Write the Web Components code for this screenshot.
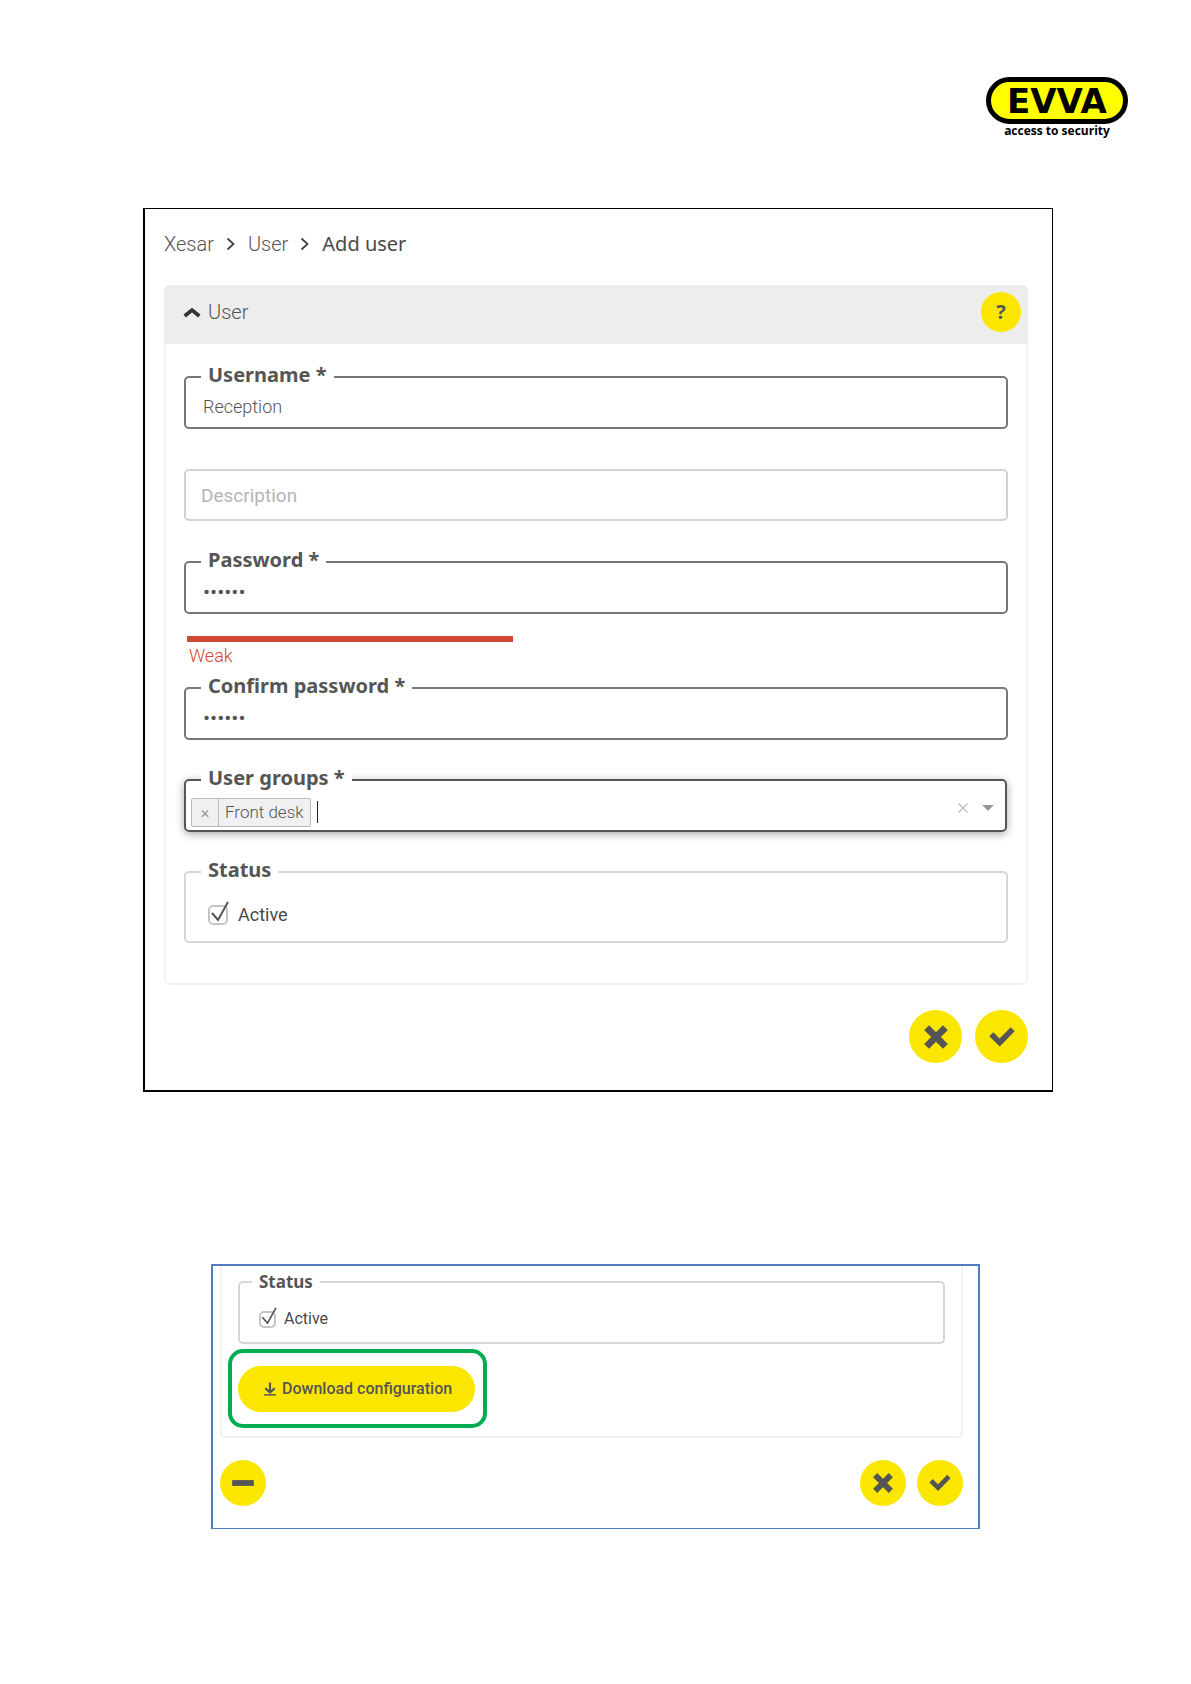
<!DOCTYPE html>
<html lang="en">
<head>
<meta charset="utf-8">
<meta name="viewport" content="width=device-width, initial-scale=1">
<title>Xesar - Add user</title>
<style>
  body {
    margin: 0;
    background: #fff;
    color: #555;
    font-family: Roboto, "Liberation Sans", sans-serif;
    font-size: 18px;
    line-height: 24px;
  }
</style>
</head>
<body>
<manual-page></manual-page>

<script>
const define = (name, html, setup) => {
  const template = document.createElement('template');
  template.innerHTML = html;

  customElements.define(name, class extends HTMLElement {
    constructor() {
      super();
      this.attachShadow({ mode: 'open' });
      this.shadowRoot.appendChild(template.content.cloneNode(true));
    }

    connectedCallback() {
      if (setup) setup(this, this.shadowRoot);
    }
  });
};

const ICONS = {
  cross: '<path d="M2.6 2.6 21.4 21.4M21.4 2.6 2.6 21.4" stroke-width="7"/>',
  check: '<path d="M1.3 9.3 9.7 17.5 22.7 4.2" stroke-width="5.6"/>',
  minus: '<path d="M-1 12H25" stroke-width="7"/>',
  right: '<path d="M5 1 17 12 5 23" stroke-width="3.6"/>',
  up: '<path d="M1 18 12 9 23 18" stroke-width="5.5"/>',
  clear: '<path d="M3 3 21 21M21 3 3 21" stroke-width="2.4"/>',
  down: '<path d="M2 7H22L12 17Z" fill="currentColor" stroke="none"/>',
  download: '<path d="M12 1V18M4 10.5 12 18 20 10.5" stroke-width="3.6"/><path d="M2 22H22" stroke-width="2.6"/>'
};

define('ui-icon', `
  <style>
    :host { display: inline-block; flex: none; width: 24px; height: 24px; }
    svg { display: block; width: 100%; height: 100%; fill: none; stroke: currentColor; overflow: visible; }
  </style>
  <svg viewBox="0 0 24 24" aria-hidden="true"></svg>
`, (host, root) => {
  root.querySelector('svg').innerHTML = ICONS[host.getAttribute('name')];
});

define('evva-logo', `
  <style>
    :host { display: flex; flex-direction: column; align-items: center; color: #000; }
    .pill {
      box-sizing: border-box;
      width: 142px;
      height: 47px;
      border: 5px solid #000;
      border-radius: 24px;
      background: #ff0;
      text-align: center;
      font: 900 34px/38px "DejaVu Sans", sans-serif;
    }
    .claim { font: 700 12px/14px "Open Sans", "Noto Sans", sans-serif; }
  </style>
  <div class="pill">EVVA</div>
  <div class="claim">access to security</div>
`);

define('round-button', `
  <style>
    :host { display: block; flex: none; }
    button {
      display: flex;
      align-items: center;
      justify-content: center;
      width: var(--button-size, 53px);
      height: var(--button-size, 53px);
      padding: 0;
      border: 0;
      border-radius: 50%;
      background: #fbe600;
      color: #555;
      font: 700 20px/24px "Noto Sans", sans-serif;
    }
    ::slotted(ui-icon) { width: var(--icon-size, 24px); height: var(--icon-size, 24px); }
  </style>
  <button type="button"><slot></slot></button>
`, (host, root) => {
  root.querySelector('button').setAttribute('aria-label', host.getAttribute('label'));
});

define('bread-crumbs', `
  <style>
    :host { display: block; font-size: 20px; }
    nav { display: flex; align-items: center; gap: 11px; }
    a { color: inherit; text-decoration: none; font-weight: 300; }
    ui-icon { width: 12px; height: 12px; color: #444; }
    .current { color: #4a4a4a; font-family: "Noto Sans", sans-serif; }
  </style>
  <nav aria-label="Breadcrumb">
    <a href="#xesar">Xesar</a>
    <ui-icon name="right"></ui-icon>
    <a href="#user">User</a>
    <ui-icon name="right"></ui-icon>
    <span class="current">Add user</span>
  </nav>
`);

define('form-panel', `
  <style>
    :host { display: block; border-radius: 5px; overflow: hidden; }
    header {
      display: flex;
      align-items: center;
      justify-content: space-between;
      height: 54px;
      padding: 0 7px 5px 20px;
      background: #ededed;
    }
    .toggle {
      display: flex;
      align-items: center;
      gap: 8px;
      padding: 0;
      border: 0;
      background: none;
      color: inherit;
      font: inherit;
      font-size: 20px;
      font-weight: 300;
    }
    .toggle ui-icon { width: 16px; height: 16px; color: #333; }
    round-button { --button-size: 40px; }
    .body {
      display: flex;
      flex-direction: column;
      gap: 28px;
      padding: 21px 18px 40px;
      border: 2px solid #f2f2f2;
      border-top: 0;
      border-radius: 0 0 5px 5px;
    }
  </style>
  <header>
    <button class="toggle" type="button" aria-expanded="true">
      <ui-icon name="up"></ui-icon><span></span>
    </button>
    <round-button label="Help">?</round-button>
  </header>
  <div class="body"><slot></slot></div>
`, (host, root) => {
  root.querySelector('span').textContent = host.getAttribute('heading');
});

// Box with its caption set into the top border
const FIELDSET = `
  fieldset {
    min-width: 0;
    margin: 0;
    padding: 0 15px;
    border: 2px solid #777;
    border-radius: 5px;
  }
  legend {
    padding: 0 7px var(--legend-lift, 4px);
    background: #fff;
    font: 700 var(--legend-size, 20px)/20px "Noto Sans", sans-serif;
  }
`;

define('text-field', `
  <style>
    :host { display: block; }
    ${FIELDSET}
    input {
      box-sizing: border-box;
      display: block;
      width: 100%;
      height: 38px;
      padding: 0 2px 3px;
      border: 0;
      outline: 0;
      background: none;
      color: inherit;
      font: inherit;
      font-weight: 300;
    }
    input[type=password] { font-size: 21px; font-weight: 400; }
    input::placeholder { color: #b5b5b5; font-weight: 400; opacity: 1; }
    :host([placeholder]) { margin: 12px 0 1px; }
    :host([placeholder]) fieldset { border-color: #d2d2d2; }
    :host([placeholder]) input { height: 48px; padding: 0; font-size: 19px; }
  </style>
  <fieldset>
    <legend><label for="control"></label></legend>
    <input id="control">
  </fieldset>
`, (host, root) => {
  const input = root.querySelector('input');
  input.type = host.getAttribute('type') || 'text';
  input.value = host.getAttribute('value') || '';
  if (host.hasAttribute('placeholder')) {
    input.placeholder = host.getAttribute('placeholder');
    input.setAttribute('aria-label', input.placeholder);
    root.querySelector('legend').remove();
  } else {
    root.querySelector('label').textContent = host.getAttribute('label');
  }
});

define('password-strength', `
  <style>
    :host { display: block; margin: -6px 0 -20px 3px; color: #d24635; font-weight: 300; }
    .bar { width: 326px; max-width: 100%; height: 6px; background: #d24635; }
    .text { padding: 2px 2px 0; }
  </style>
  <div class="bar"></div>
  <div class="text"><slot></slot></div>
`);

define('group-select', `
  <style>
    :host { display: block; }
    ${FIELDSET}
    fieldset {
      margin-right: 1px;
      border-color: #555;
      box-shadow: 0 2px 9px rgba(0, 0, 0, 0.35);
    }
    .row { display: flex; align-items: center; height: 38px; margin: 0 -10px; }
    .chip {
      display: flex;
      box-sizing: border-box;
      height: 29px;
      margin-top: 2px;
      border: 1px solid #bbb;
      border-radius: 2px;
      background: #f0f0f0;
      font-size: 17px;
      font-weight: 300;
      line-height: 26px;
    }
    .chip button {
      width: 27px;
      padding: 0;
      border: 0;
      border-right: 1px solid #bbb;
      background: none;
      color: #888;
      font: inherit;
    }
    .chip span { padding: 0 6px; }
    input {
      flex: 1;
      min-width: 0;
      height: 22px;
      margin: 2px 0 0 6px;
      padding: 0;
      border: 0;
      border-left: 1px solid #222;
      outline: 0;
      background: none;
      font: inherit;
    }
    .tool {
      display: flex;
      padding: 0;
      border: 0;
      margin: 0 0 6px 12px;
      background: none;
      color: #bbb;
    }
    .clear ui-icon { width: 12px; height: 12px; }
    .open { color: #999; margin-right: 5px; }
    .open ui-icon { width: 14px; height: 14px; }
  </style>
  <fieldset>
    <legend><label for="search"></label></legend>
    <div class="row">
      <div class="chip"><button type="button" aria-label="Remove">×</button><span></span></div>
      <input id="search" type="text">
      <button class="tool clear" type="button" aria-label="Clear"><ui-icon name="clear"></ui-icon></button>
      <button class="tool open" type="button" aria-label="Open list"><ui-icon name="down"></ui-icon></button>
    </div>
  </fieldset>
`, (host, root) => {
  root.querySelector('label').textContent = host.getAttribute('label');
  root.querySelector('.chip span').textContent = host.getAttribute('value');
});

define('status-field', `
  <style>
    :host { display: block; }
    ${FIELDSET}
    fieldset { padding: 0 var(--status-inset, 15px); border-color: #d6d6d6; }
    .row {
      display: flex;
      align-items: center;
      box-sizing: border-box;
      height: var(--status-height, 57px);
      padding: 4px 7px 0;
    }
    .box { position: relative; display: flex; }
    input {
      appearance: none;
      box-sizing: border-box;
      width: var(--box-size, 20px);
      height: var(--box-size, 20px);
      margin: 0;
      border: 2px solid #c4c4c4;
      border-radius: 5px;
    }
    /* the tick runs out over the top right corner of the box */
    svg {
      position: absolute;
      left: 0;
      bottom: 0;
      width: 120%;
      height: 120%;
      fill: none;
      stroke: #555;
      stroke-width: 2;
      pointer-events: none;
    }
    input:not(:checked) + svg { display: none; }
    label { padding-left: var(--box-gap, 10px); color: #4a4a4a; }
  </style>
  <fieldset>
    <legend>Status</legend>
    <div class="row">
      <span class="box">
        <input id="active" type="checkbox" checked>
        <svg viewBox="0 0 24 24" aria-hidden="true"><path d="M4 12 10 19 20 1"/></svg>
      </span>
      <label for="active">Active</label>
    </div>
  </fieldset>
`);

define('download-button', `
  <style>
    :host { display: block; }
    button {
      display: flex;
      align-items: center;
      gap: 5px;
      height: 46px;
      padding: 0 23px 0 25px;
      border: 0;
      border-radius: 23px;
      background: #fbe600;
      color: #555;
      font: inherit;
      font-weight: 500;
    }
    ui-icon { width: 14px; height: 14px; }
  </style>
  <button type="button"><ui-icon name="download"></ui-icon><slot></slot></button>
`);

define('add-user-view', `
  <style>
    :host {
      display: block;
      padding: 23px 24px 27px 19px;
      border: solid #000;
      border-width: 1px 1px 2px 2px;
    }
    form-panel { margin: 29px 0 25px; }
    .actions { display: flex; justify-content: flex-end; gap: 13px; }
  </style>
  <bread-crumbs></bread-crumbs>
  <form-panel heading="User">
    <text-field label="Username *" value="Reception"></text-field>
    <text-field placeholder="Description"></text-field>
    <text-field label="Password *" type="password" value="secret"></text-field>
    <password-strength>Weak</password-strength>
    <text-field label="Confirm password *" type="password" value="secret"></text-field>
    <group-select label="User groups *" value="Front desk"></group-select>
    <status-field></status-field>
  </form-panel>
  <div class="actions">
    <round-button label="Cancel"><ui-icon name="cross"></ui-icon></round-button>
    <round-button label="Save"><ui-icon name="check"></ui-icon></round-button>
  </div>
`);

define('download-view', `
  <style>
    :host {
      display: block;
      padding: 0 15px 22px 7px;
      border: solid #4f7db8;
      border-width: 2px 2px 1px;
      font-size: 16px;
      --legend-size: 17px;
      --legend-lift: 0;
      --status-height: 50px;
      --status-inset: 12px;
      --box-size: 17px;
      --box-gap: 8px;
      --button-size: 46px;
      --icon-size: 20px;
    }
    .body {
      padding: 6px 6px 8px;
      border: 2px solid #f2f2f2;
      border-top: 0;
      border-radius: 0 0 5px 5px;
    }
    status-field { margin: 0 10px 5px; }
    .marked {
      width: fit-content;
      padding: 13px 8px 12px 6px;
      border: 4px solid #00ad50;
      border-radius: 15px;
    }
    .actions { display: flex; gap: 11px; margin-top: 22px; }
    .delete { flex: 1; }
  </style>
  <div class="body">
    <status-field></status-field>
    <div class="marked"><download-button>Download configuration</download-button></div>
  </div>
  <div class="actions">
    <round-button class="delete" label="Delete"><ui-icon name="minus"></ui-icon></round-button>
    <round-button label="Cancel"><ui-icon name="cross"></ui-icon></round-button>
    <round-button label="Save"><ui-icon name="check"></ui-icon></round-button>
  </div>
`);

define('manual-page', `
  <style>
    :host { display: block; }
    header { display: flex; justify-content: flex-end; padding: 77px 63px 70px; }
    add-user-view { margin: 0 138px 172px 143px; }
    download-view { margin: 0 211px 80px; }
  </style>
  <header><evva-logo></evva-logo></header>
  <main>
    <add-user-view></add-user-view>
    <download-view></download-view>
  </main>
`);
</script>
</body>
</html>
